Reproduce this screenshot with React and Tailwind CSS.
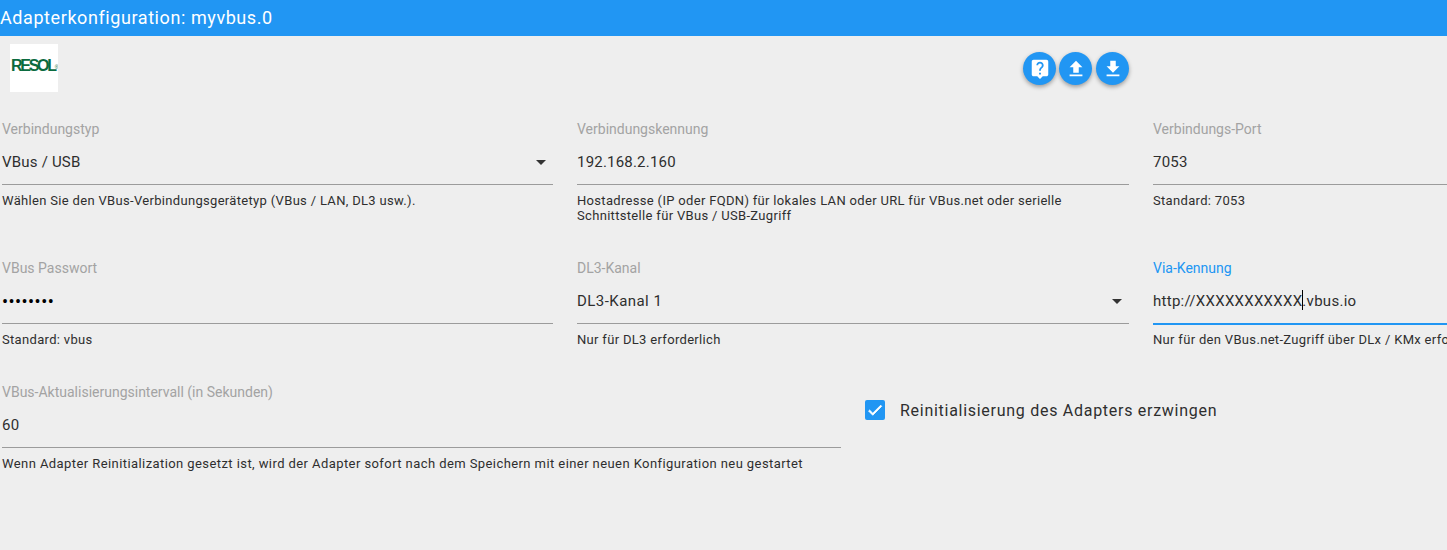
const font = { fontFamily: "Roboto, sans-serif" };

const Field = ({ label, value, help, select, focused, helpClass = "tracking-[0.32px]" }) => (
  <div className="flex flex-col">
    <label className={`h-[18px] text-sm leading-[18px] ${focused ? "text-[#2196f3]" : "text-[#a3a3a3]"}`}>
      {label}
    </label>
    <div className="mt-[12px] flex h-[24px] items-center justify-between text-[15px] leading-[23px] tracking-[0.2px] text-[#2e2e2e]">
      <span className="whitespace-nowrap">{value}</span>
      {select && (
        <svg viewBox="0 0 24 24" className="h-6 w-6 fill-[#333]">
          <path d="M7 10l5 5 5-5z" />
        </svg>
      )}
    </div>
    <div className={`mt-[10px] ${focused ? "h-[2px] bg-[#2196f3]" : "h-px bg-[#9b9b9b]"}`} />
    <p className={`text-[13px] leading-[15px] text-[#2e2e2e] ${helpClass} ${focused ? "mt-[7px] whitespace-nowrap" : "mt-[8px]"}`}>{help}</p>
  </div>
);

const RoundButton = ({ d, className = "" }) => (
  <button className={`flex h-[33px] w-[33px] items-center justify-center rounded-full bg-[#2196f3] shadow-[0_2px_4px_rgba(0,0,0,0.35)] ${className}`}>
    <svg viewBox="0 0 24 24" className="h-[22px] w-[22px] fill-white">
      <path d={d} />
    </svg>
  </button>
);

export default function App() {
  return (
    <div className="h-[550px] w-[1447px] overflow-hidden bg-[#eeeeee]" style={font}>
      <header className="flex h-[36px] items-center bg-[#2196f3] text-lg tracking-[0.58px] text-white">
        Adapterkonfiguration: myvbus.0
      </header>

      <div className="flex h-[84px] items-start pl-[10px]">
        <div className="mt-[8px] flex h-[48px] w-[48px] items-center justify-start overflow-hidden bg-white pb-[4px] pl-px">
          <span className="whitespace-nowrap text-base font-bold tracking-[-2.3px] text-[#0b6b3f]" style={{ fontFamily: "Liberation Sans, sans-serif" }}>
            RESOL<sup className="text-[5px] font-normal tracking-normal">®</sup>
          </span>
        </div>
        <div className="ml-[965px] mt-[16px] flex gap-[3px]">
          <RoundButton d="M19 2H5c-1.11 0-2 .9-2 2v14c0 1.1.89 2 2 2h4l3 3 3-3h4c1.1 0 2-.9 2-2V4c0-1.1-.9-2-2-2zm-6 16h-2v-2h2v2zm2.07-7.75l-.9.92C13.45 11.9 13 12.5 13 14h-2v-.5c0-1.1.45-2.1 1.17-2.83l1.24-1.26c.37-.36.59-.86.59-1.41 0-1.1-.9-2-2-2s-2 .9-2 2H8c0-2.21 1.79-4 4-4s4 1.79 4 4c0 .88-.36 1.68-.93 2.25z" />
          <RoundButton d="M9 16h6v-6h4l-7-7-7 7h4zm-4 2h14v2H5z" />
          <RoundButton className="ml-px" d="M19 9h-4V3H9v6H5l7 7 7-7zM5 18v2h14v-2H5z" />
        </div>
      </div>

      <div className="pl-[2px]">
        <div className="grid h-[139px] w-[1703px] grid-cols-[551px_552px_552px] gap-x-6">
          <Field label="Verbindungstyp" value="VBus / USB" select help="Wählen Sie den VBus-Verbindungsgerätetyp (VBus / LAN, DL3 usw.)." />
          <Field label="Verbindungskennung" value="192.168.2.160" help="Hostadresse (IP oder FQDN) für lokales LAN oder URL für VBus.net oder serielle Schnittstelle für VBus / USB-Zugriff" />
          <Field label="Verbindungs-Port" value="7053" help="Standard: 7053" />
        </div>
        <div className="grid h-[124px] w-[1703px] grid-cols-[551px_552px_552px] gap-x-6">
          <Field
            label="VBus Passwort"
            value={<span className="relative top-px text-lg tracking-[0.45px] text-black">••••••••</span>}
            help="Standard: vbus"
          />
          <Field label="DL3-Kanal" value={<span className="tracking-[0.45px]">DL3-Kanal 1</span>} select help="Nur für DL3 erforderlich" />
          <Field
            focused
            label="Via-Kennung"
            value={
              <span className="tracking-[0.28px]">
                http://XXXXXXXXXXX
                <span className="mx-[-0.5px] inline-block h-[20px] w-px bg-black align-[-4px]" />
                .vbus.io
              </span>
            }
            help="Nur für den VBus.net-Zugriff über DLx / KMx erforderlich"
          />
        </div>
        <div className="grid grid-cols-[839px_1fr] gap-x-6">
          <Field
            label="VBus-Aktualisierungsintervall (in Sekunden)"
            value="60"
            helpClass="tracking-[0.42px]"
            help="Wenn Adapter Reinitialization gesetzt ist, wird der Adapter sofort nach dem Speichern mit einer neuen Konfiguration neu gestartet"
          />
          <div className="mt-[8px] flex h-[38px] items-center gap-[15px]">
            <span className="flex h-[20px] w-[20px] items-center justify-center rounded-[2px] bg-[#2196f3]">
              <svg viewBox="0 0 24 24" className="h-[18px] w-[18px] fill-white stroke-white stroke-1">
                <path d="M9 16.17L4.83 12l-1.42 1.41L9 19 21 7l-1.41-1.41z" />
              </svg>
            </span>
            <span className="relative top-px text-base tracking-[0.72px] text-[#2e2e2e]">Reinitialisierung des Adapters erzwingen</span>
          </div>
        </div>
      </div>
    </div>
  );
}
